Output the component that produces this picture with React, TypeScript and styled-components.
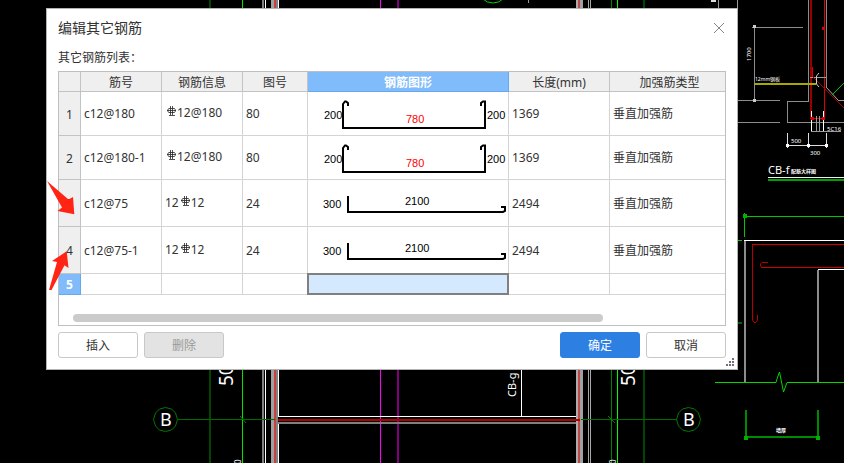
import React from "react";
import styled, { createGlobalStyle, css } from "styled-components";

const GlobalStyle = createGlobalStyle`
  * { box-sizing: border-box; }
  body {
    margin: 0;
    background: #000;
    color: #333;
    font-family: "Noto Sans", "Noto Sans CJK SC", sans-serif;
    font-size: 12px;
    line-height: 16px;
  }
`;

const Workspace = styled.main`
  position: relative;
  min-height: 100vh;
  padding: 8px 106px 93px 46px;
  overflow: hidden;
`;

const DrawingLayer = styled.svg`
  position: absolute;
  top: 0;
  left: 0;
`;

const MarkLayer = styled(DrawingLayer)`
  pointer-events: none;
`;

const Dialog = styled.section`
  position: relative;
  display: flex;
  flex-direction: column;
  padding: 8px 11px 11px;
  border: 1px solid #b4b4b4;
  background: #fff;
`;

const TitleBar = styled.header`
  display: flex;
  align-items: center;
  justify-content: space-between;
  height: 22px;
`;

const Title = styled.h1`
  margin: 0;
  font-size: 14px;
  font-weight: 400;
  line-height: 20px;
`;

const CloseButton = styled.button`
  display: flex;
  padding: 1px;
  border: 0;
  background: none;
`;

const ListLabel = styled.p`
  margin: 11px 0 5px;
`;

const TableFrame = styled.div`
  display: flex;
  flex-direction: column;
  border: 1px solid #bfbfbf;
`;

const Table = styled.table`
  width: 100%;
  table-layout: fixed;
  border-collapse: separate;
  border-spacing: 0;
`;

const Col = styled.col<{ $width?: number }>`
  ${(p) => p.$width && `width: ${p.$width}px;`}
`;

const headStyle = css<{ $active?: boolean }>`
  padding: 2px 0 0;
  border: solid ${(p) => (p.$active ? "#66a8ec" : "#c3c3c3")};
  border-width: 0 1px 1px 0;
  background: ${(p) => (p.$active ? "#80bbfb" : "#efefef")};
  color: ${(p) => (p.$active ? "#fff" : "#333")};
  font-weight: ${(p) => (p.$active ? 700 : 400)};
  text-align: center;
`;

const HeadCell = styled.th<{ $active?: boolean }>`
  ${headStyle}
  height: 20px;
  &:last-child {
    padding-left: 4px;
    border-right: 0;
  }
`;

const RowHead = styled.th<{ $active?: boolean }>`
  ${headStyle}
`;

const Row = styled.tr<{ $height: number }>`
  height: ${(p) => p.$height}px;
`;

const Cell = styled.td<{ $flush?: boolean; $selected?: boolean }>`
  position: relative;
  padding: ${(p) => (p.$flush ? "0" : "1px 3px 0")};
  border: solid #d4d4d4;
  border-width: 0 1px 1px 0;
  white-space: nowrap;
  &:last-child { border-right: 0; }
  ${(p) =>
    p.$selected &&
    css`
      background: #d4e9fe;
      &::after {
        content: "";
        position: absolute;
        inset: -1px;
        border: 2px solid #808080;
      }
    `}
`;

const BarInfo = styled.span`
  display: flex;
  align-items: center;
  padding-bottom: 2px;
`;

const BarIcon = styled.svg`
  flex: none;
  margin: 0 0 4px 2px;
`;

const ShapeSvg = styled.svg`
  display: block;
  margin: 0 auto;
  font-family: "Liberation Sans", sans-serif;
  font-size: 11px;
`;

const ScrollArea = styled.div`
  padding: 19px 14px 3px;
`;

const ScrollThumb = styled.div`
  width: 83%;
  height: 8px;
  border-radius: 4px;
  background: #cbcbcb;
`;

const Footer = styled.footer`
  display: flex;
  justify-content: space-between;
  margin-top: 6px;
`;

const ButtonGroup = styled.div`
  display: flex;
  gap: 6px;
`;

const Button = styled.button<{ $primary?: boolean }>`
  width: 80px;
  height: 26px;
  padding: 2px 0 0;
  border: 1px solid ${(p) => (p.$primary ? "#2d80e2" : "#c8c8c8")};
  border-radius: 3px;
  background: ${(p) => (p.$primary ? "#2d80e2" : "#fff")};
  color: ${(p) => (p.$primary ? "#fff" : "#333")};
  font: inherit;
  &:disabled {
    background: #e3e3e3;
    color: #999;
  }
`;

const Grip = styled.svg`
  position: absolute;
  right: 3px;
  bottom: 3px;
`;

function RebarSymbol() {
  return (
    <BarIcon width="10" height="10" viewBox="0 0 10 10" fill="none" stroke="#222" role="img" aria-label="钢筋">
      <path d="M3.5 0V9M5.5 0V9M0 4.5H9M2 9.5H8M2 2.5H7.5C8.6 3 8.6 6 7.5 6.500H2C.2 6 .2 3 2 2.500Z" strokeWidth=".8" />
    </BarIcon>
  );
}

function HookedShape() {
  return (
    <ShapeSvg width="200" height="43" viewBox="0 0 200 43">
      <path d="M40 14V11L38 9.5H37L35 12V36H177V9.5H175L173 11V14" fill="none" stroke="#000" strokeWidth="2" />
      <text x="16" y="27">200</text>
      <text x="98" y="31" fill="#f00">780</text>
      <text x="179" y="27">200</text>
    </ShapeSvg>
  );
}

function AngleShape() {
  return (
    <ShapeSvg width="200" height="46" viewBox="0 0 200 46">
      <path d="M193 27H197V31L195 32H40V16" fill="none" stroke="#000" strokeWidth="2" />
      <text x="15" y="28">300</text>
      <text x="97" y="25">2100</text>
    </ShapeSvg>
  );
}

interface Bar {
  name: string;
  prefix: string;
  info: string;
  figure: string;
  hooked: boolean;
  length: string;
}

const bars: Bar[] = [
  { name: "c12@180", prefix: "", info: "12@180", figure: "80", hooked: true, length: "1369" },
  { name: "c12@180-1", prefix: "", info: "12@180", figure: "80", hooked: true, length: "1369" },
  { name: "c12@75", prefix: "12", info: "12", figure: "24", hooked: false, length: "2494" },
  { name: "c12@75-1", prefix: "12", info: "12", figure: "24", hooked: false, length: "2494" },
];

const columns = ["筋号", "钢筋信息", "图号", "钢筋图形", "长度(mm)", "加强筋类型"];
const columnWidths = [22, 81, 81, 65, 201, 101];

const gridBubble = "M12 0L10 6.5L6 10.5L0 12L-6 10.5L-10 6.5L-12 0L-10 -6.5L-6 -10.5L0 -12L6 -10.5L10 -6.5Z";

function CadDrawing() {
  return (
    <DrawingLayer
      width="844"
      height="463"
      viewBox="0 0 844 463"
      fill="none"
      fontFamily='"Noto Sans", "Noto Sans CJK SC", sans-serif'
      aria-hidden="true"
    >
      <g shapeRendering="crispEdges">
        <path d="M210 0V463M644 0V463" stroke="#004600" strokeWidth="2" />
        <path d="M242.5 0V463" stroke="#00e400" />
        <path d="M617.5 0V463" stroke="#00ff00" />
        <path d="M611.5 0V463" stroke="#008000" />
        <path d="M263 0V463" stroke="#808080" strokeWidth="2" />
        <path d="M265.5 0V463" stroke="#fff" />
        <path d="M273 0V463" stroke="#a0a0a0" strokeWidth="4" />
        <path d="M277 0V463" stroke="#808080" strokeWidth="2" />
        <path d="M275 0V463" stroke="#c84040" strokeWidth="2" />
        <path d="M278.5 0V416M278.5 423V463" stroke="#fff" />
        <path d="M577 0V463" stroke="#acacac" strokeWidth="3" />
        <path d="M581.5 0V463" stroke="#a0a0a0" strokeWidth="3" />
        <path d="M579 0V463" stroke="#bd4848" strokeWidth="2" />
        <path d="M588.5 0V463M590.5 0V463" stroke="#a8a8a8" />
        <path d="M380.5 0V463" stroke="#f0f" />
        <path d="M398 0V463" stroke="#800080" strokeWidth="2" />
        <path d="M278 416.5H576M521.5 370V416" stroke="#fff" />
        <path d="M278 420H580" stroke="#b00000" strokeWidth="2" />
        <path d="M278 423H576" stroke="#808080" strokeWidth="2" />
        <path d="M178 419.5H275M581 419.5H677" stroke="#006c00" />
        <path d="M528.5 0V3M718.5 0V8M737.5 0V8" stroke="#999" />
        <path d="M711 1H716" stroke="#ddd" strokeWidth="2" />
      </g>
      <path d="M240 416L246 423M608 416L615 423" stroke="#008000" />
      <path d={gridBubble} transform="translate(165.500 419.500)" stroke="#007800" />
      <path d={gridBubble} transform="translate(688.500 419.500)" stroke="#007800" />
      <circle cx="493" cy="-12" r="15" stroke="#00d000" />

      <g fill="#fff">
        <text x="160" y="426" fontSize="18">B</text>
        <text x="683" y="426" fontSize="18">B</text>
        <text transform="translate(233 386) rotate(-90)" fontSize="19">50</text>
        <text transform="translate(635 386) rotate(-90)" fontSize="19">50</text>
        <text transform="translate(241 464) rotate(-90)" fontSize="8">0</text>
        <text transform="translate(616 464) rotate(-90)" fontSize="8">0</text>
        <text transform="translate(516 397) rotate(-90)" fontSize="11">CB-g</text>
        <text transform="translate(751 61) rotate(-90)" fontSize="6">1700</text>
        <text x="755" y="81" fontSize="5">12mm钢板</text>
        <text x="827" y="131" fontSize="6">5C16</text>
        <text x="791" y="143" fontSize="6">500</text>
        <text x="810" y="155" fontSize="6">300</text>
        <text x="768" y="174" fontSize="11">CB-f</text>
        <text x="791" y="173" fontSize="5" fontWeight="700">配筋大样图</text>
        <text x="776" y="432" fontSize="5" fontWeight="700">墙厚</text>
      </g>

      <g shapeRendering="crispEdges">
        <path d="M808.500 0V101H787.500V122.500H844M826.500 0V87M752 27.500H803M754.500 25V102M738 100.500H780M738 122.500H780" stroke="#8c8c8c" />
        <path d="M811 0V118" stroke="#980000" strokeWidth="2" />
        <path d="M824.500 0V120M812.500 67V77M810 118.500H825" stroke="#e00000" strokeWidth="1" />
        <path d="M754 84H816" stroke="#a8a800" strokeWidth="2" />
        <path d="M811.500 111V132M823.500 111V132" stroke="#fff" />
        <path d="M816.500 116V132M819.500 116V132M811 131.500H841M810 77.500H826M838 100.500H844" stroke="#999" />
        <path d="M787.500 133V148M808.500 133V148M826.500 133V148M786 145.500H828" stroke="#ddd" />
        <path d="M768 177.500H844" stroke="#eee" />
        <path d="M768 180H844" stroke="#00a000" strokeWidth="2" />
        <path d="M738 240.500H742M744.500 213V237M744 216.500H844" stroke="#00c800" />
        <path d="M738 323H742" stroke="#006000" strokeWidth="2" />
        <path d="M744 240.500H844M818 269.500H844" stroke="#fff" />
        <path d="M745 241V382M818 270V382" stroke="#8c8c8c" strokeWidth="2" />
        <path d="M752 244.500H844M761 267.500H844" stroke="#d00000" />
        <path d="M746 410V440M818 410V440M745 437H819" stroke="#008a00" strokeWidth="2" />
      </g>
      <path d="M752.500 245V320L754 322.500H756L757.500 320V315M768 262.500H762L760.500 264V266L762 267.500" stroke="#b40000" strokeWidth="1" />
      <path d="M813 77L844 108" stroke="#a00000" />
      <path d="M826 87L838 100" stroke="#aaa" />
      <path d="M832 95L844 83" stroke="#00c000" />
      <path d="M819 73L816.500 76V84L819 87M822 30L824 28" stroke="#ccc" />
      <path d="M715 382.500H776L777 379L779.500 372L783.500 392L787 382.500H844" stroke="#00d800" />
      <path d="M753 25h3v3h-3zM753 99h3v3h-3z" fill="#ccc" />
      <path d="M786 144h3v3h-3zM807 144h3v3h-3zM825 144h3v3h-3z" fill="#fff" />
      <path d="M743 214h4v4h-4zM744 436h4v4h-4zM816 436h4v4h-4z" fill="#00b000" />
      <path d="M811 117h3v3h-3zM822 117h3v3h-3zM822 27h3v3h-3z" fill="#e00000" />
    </DrawingLayer>
  );
}

export default function App() {
  return (
    <>
      <GlobalStyle />
      <Workspace>
        <CadDrawing />
        <Dialog role="dialog" aria-labelledby="dialog-title">
          <TitleBar>
            <Title id="dialog-title">编辑其它钢筋</Title>
            <CloseButton type="button" aria-label="关闭">
              <svg width="12" height="12" viewBox="0 0 12 12" stroke="#858585">
                <path d="M1 1L11 11M11 1L1 11" />
              </svg>
            </CloseButton>
          </TitleBar>
          <ListLabel id="list-label">其它钢筋列表：</ListLabel>
          <TableFrame>
            <Table aria-labelledby="list-label">
              <colgroup>
                {columnWidths.map((w, i) => (
                  <Col key={i} $width={w} />
                ))}
                <Col />
              </colgroup>
              <thead>
                <tr>
                  <HeadCell />
                  {columns.map((c) => (
                    <HeadCell key={c} scope="col" $active={c === "钢筋图形"}>
                      {c}
                    </HeadCell>
                  ))}
                </tr>
              </thead>
              <tbody>
                {bars.map((bar, i) => (
                  <Row key={bar.name} $height={bar.hooked ? 44 : 47}>
                    <RowHead scope="row">{i + 1}</RowHead>
                    <Cell>{bar.name}</Cell>
                    <Cell>
                      <BarInfo>
                        {bar.prefix}
                        <RebarSymbol />
                        {bar.info}
                      </BarInfo>
                    </Cell>
                    <Cell>{bar.figure}</Cell>
                    <Cell $flush>{bar.hooked ? <HookedShape /> : <AngleShape />}</Cell>
                    <Cell>{bar.length}</Cell>
                    <Cell>垂直加强筋</Cell>
                  </Row>
                ))}
                <Row $height={21}>
                  <RowHead scope="row" $active>
                    5
                  </RowHead>
                  <Cell />
                  <Cell />
                  <Cell />
                  <Cell $selected />
                  <Cell />
                  <Cell />
                </Row>
              </tbody>
            </Table>
            <ScrollArea>
              <ScrollThumb />
            </ScrollArea>
          </TableFrame>
          <Footer>
            <ButtonGroup>
              <Button type="button">插入</Button>
              <Button type="button" disabled>
                删除
              </Button>
            </ButtonGroup>
            <ButtonGroup>
              <Button type="button" $primary>
                确定
              </Button>
              <Button type="button">取消</Button>
            </ButtonGroup>
          </Footer>
          <Grip width="8" height="8" viewBox="0 0 8 8" fill="#6a6f78" aria-hidden="true">
            <path d="M6 0h2v2H6zM3 3h2v2H3zM6 3h2v2H6zM0 6h2v2H0zM3 6h2v2H3zM6 6h2v2H6z" />
          </Grip>
        </Dialog>
        <MarkLayer width="90" height="300" viewBox="0 0 90 300" fill="#ff2414" aria-hidden="true">
          <path d="M47 181L68.500 199.500L73 197L74.300 214.300L57.500 211L62 207.500Z" />
          <path d="M49 290L57 262L52 261L66.700 251.300L68.500 268L64.500 265.300L51.500 290Z" />
        </MarkLayer>
      </Workspace>
    </>
  );
}
